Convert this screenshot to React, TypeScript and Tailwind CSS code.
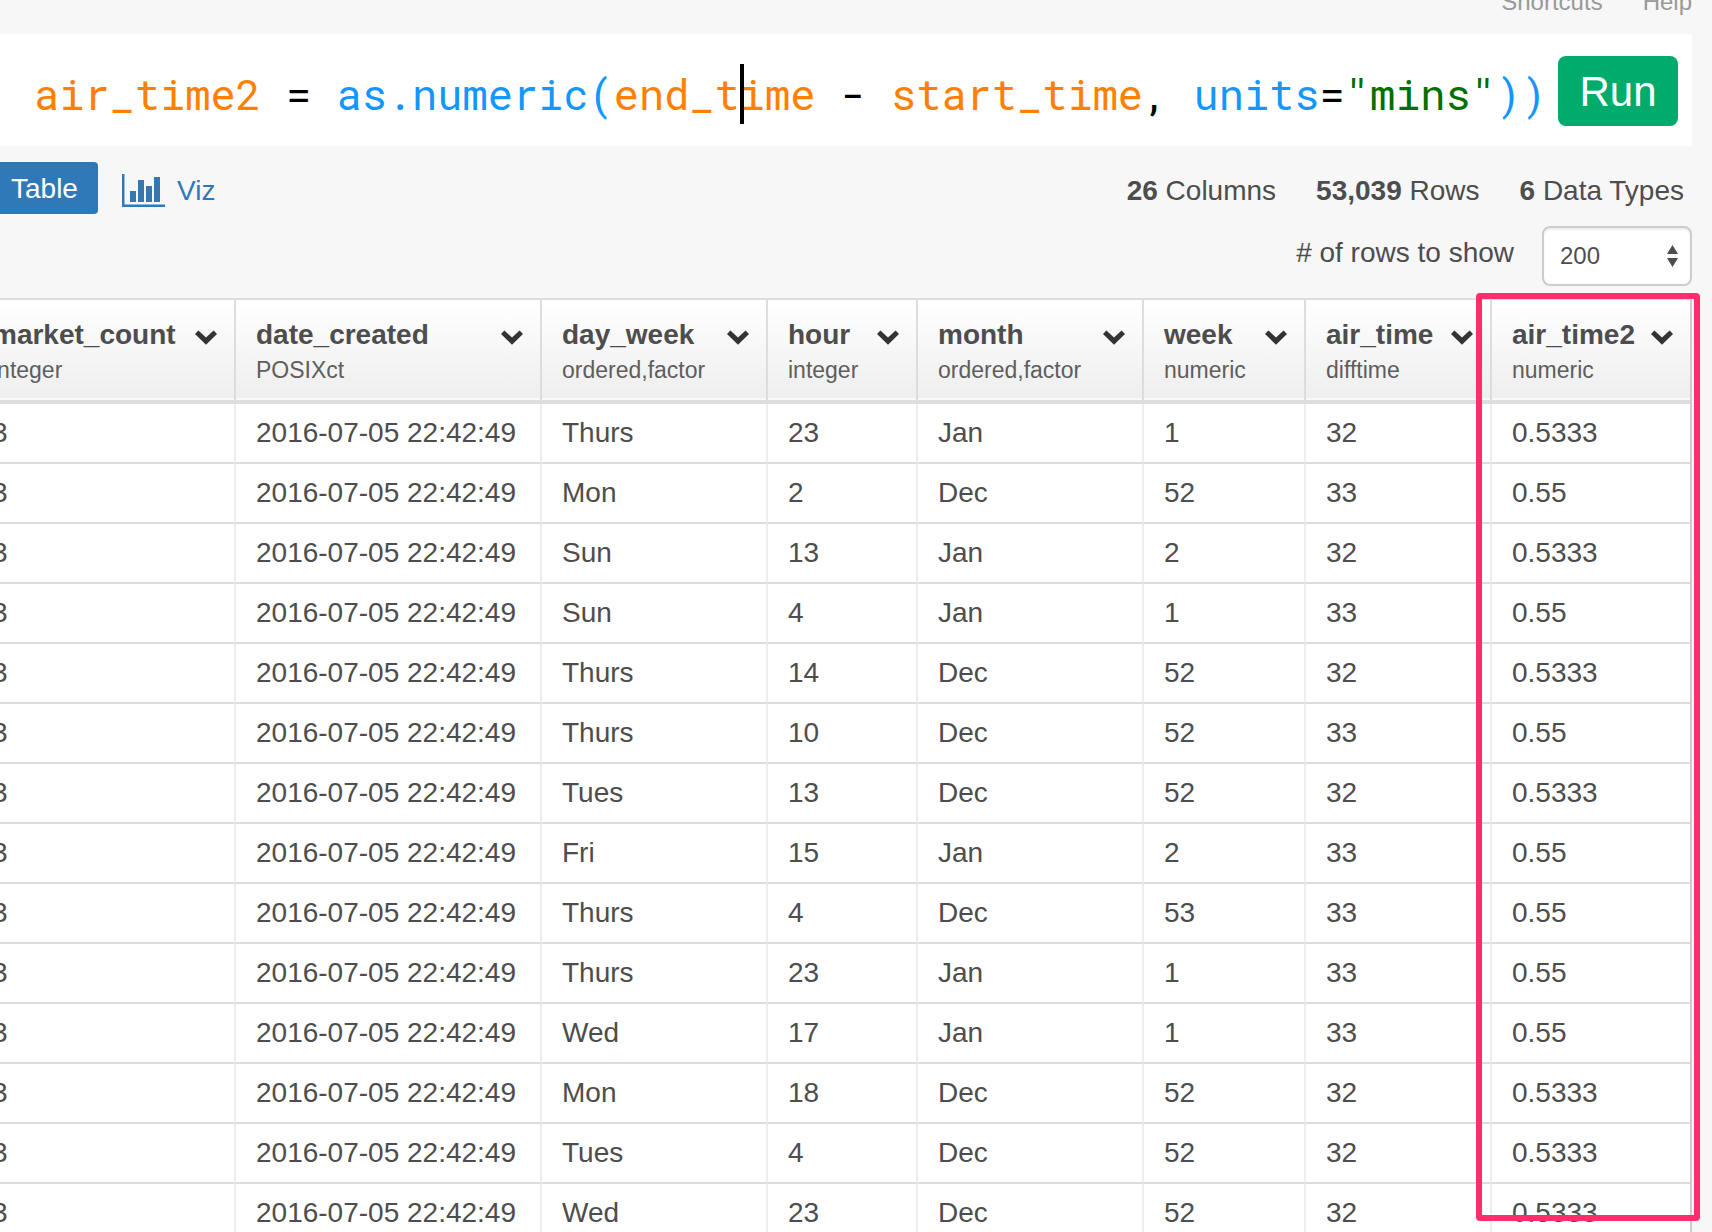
import { useState } from 'react';

type Column = { name: string; type: string; width: string };

const COLUMNS: Column[] = [
  { name: 'market_count', type: 'integer', width: 'w-[264px]' },
  { name: 'date_created', type: 'POSIXct', width: 'w-[306px]' },
  { name: 'day_week', type: 'ordered,factor', width: 'w-[226px]' },
  { name: 'hour', type: 'integer', width: 'w-[150px]' },
  { name: 'month', type: 'ordered,factor', width: 'w-[226px]' },
  { name: 'week', type: 'numeric', width: 'w-[162px]' },
  { name: 'air_time', type: 'difftime', width: 'w-[186px]' },
  { name: 'air_time2', type: 'numeric', width: 'w-[198px]' },
];

const CREATED = '2016-07-05 22:42:49';

const ROWS: string[][] = [
  ['3', CREATED, 'Thurs', '23', 'Jan', '1', '32', '0.5333'],
  ['3', CREATED, 'Mon', '2', 'Dec', '52', '33', '0.55'],
  ['3', CREATED, 'Sun', '13', 'Jan', '2', '32', '0.5333'],
  ['3', CREATED, 'Sun', '4', 'Jan', '1', '33', '0.55'],
  ['3', CREATED, 'Thurs', '14', 'Dec', '52', '32', '0.5333'],
  ['3', CREATED, 'Thurs', '10', 'Dec', '52', '33', '0.55'],
  ['3', CREATED, 'Tues', '13', 'Dec', '52', '32', '0.5333'],
  ['3', CREATED, 'Fri', '15', 'Jan', '2', '33', '0.55'],
  ['3', CREATED, 'Thurs', '4', 'Dec', '53', '33', '0.55'],
  ['3', CREATED, 'Thurs', '23', 'Jan', '1', '33', '0.55'],
  ['3', CREATED, 'Wed', '17', 'Jan', '1', '33', '0.55'],
  ['3', CREATED, 'Mon', '18', 'Dec', '52', '32', '0.5333'],
  ['3', CREATED, 'Tues', '4', 'Dec', '52', '32', '0.5333'],
  ['3', CREATED, 'Wed', '23', 'Dec', '52', '32', '0.5333'],
];

function ChevronIcon(): React.ReactElement {
  return (
    <svg width="22" height="15" viewBox="0 0 22 15" aria-hidden="true">
      <path d="M3.4 0.4 L11 7.6 L18.6 0.4 L22 4 L11 14.8 L0 4 Z" fill="#333" />
    </svg>
  );
}

function BarChartIcon(): React.ReactElement {
  return (
    <svg width="43" height="33" viewBox="0 0 43 33" fill="#3079b9" aria-hidden="true">
      <path d="M0 0h2.5v30.5h40.5v2.5H0z" />
      <path d="M8 17h6v11H8zM16 6h6v22h-6zM24 12h6v16h-6zM32 3h6v25h-6z" />
    </svg>
  );
}

// Formula line with syntax colours and the caret inside end_time
function FormulaEditor(): React.ReactElement {
  return (
    <div
      role="textbox"
      aria-label="Formula"
      tabIndex={0}
      className="flex-1 whitespace-pre pl-[34px] pt-2 font-['Roboto_Mono','DejaVu_Sans_Mono',monospace] text-[42px] leading-[60px] text-black outline-none"
    >
      <span className="text-[#ff8000]">air_time2</span>
      {' = '}
      <span className="text-[#1496ff]">as.numeric(</span>
      <span className="text-[#ff8000]">
        end_t
        <span className="relative">
          <span className="absolute -top-0.5 left-0 h-[60px] w-1 bg-black" />
        </span>
        ime
      </span>
      {' - '}
      <span className="text-[#ff8000]">start_time</span>
      {', '}
      <span className="text-[#1496ff]">units</span>
      {'='}
      <span className="text-[#007000]">"mins"</span>
      <span className="text-[#1496ff]">))</span>
    </div>
  );
}

function Stat({ value, label }: { value: string; label: string }): React.ReactElement {
  return (
    <span>
      <b>{value}</b> {label}
    </span>
  );
}

export default function App(): React.ReactElement {
  const [limit, setLimit] = useState('200');

  return (
    <div className="h-screen overflow-hidden bg-[#f7f7f7] font-['Liberation_Sans',Arial,sans-serif] text-[28px] leading-8 text-[#4d4d4d]">
      <nav className="flex h-[34px] items-start justify-end gap-10 overflow-hidden pr-5 text-2xl text-[#999]">
        <a href="#shortcuts" className="-mt-[14px]">Shortcuts</a>
        <a href="#help" className="-mt-[14px]">Help</a>
      </nav>

      <div className="mr-5 flex h-28 items-center bg-white pr-[14px]">
        <FormulaEditor />
        <button
          type="button"
          className="mt-[22px] h-[70px] w-[120px] shrink-0 self-start rounded-lg bg-[#00ab6c] pt-0.5 text-[42px] leading-[68px] text-white"
        >
          Run
        </button>
      </div>

      <div className="mt-4 flex h-[52px] items-center justify-between pr-7">
        <div className="flex items-center gap-6">
          <button type="button" className="h-[52px] w-[98px] rounded-r bg-[#3079b9] pt-0.5 pl-[11px] text-left text-white">
            Table
          </button>
          <button type="button" className="flex items-center gap-3 text-[#3079b9]">
            <span className="pt-1">
              <BarChartIcon />
            </span>
            <span className="pt-1.5">Viz</span>
          </button>
        </div>
        <div className="flex gap-10 pt-1.5">
          <Stat value="26" label="Columns" />
          <Stat value="53,039" label="Rows" />
          <Stat value="6" label="Data Types" />
        </div>
      </div>

      <div className="mt-3 flex h-[60px] items-center justify-end gap-7 pr-5">
        <label htmlFor="row-limit" className="pb-1.5">
          # of rows to show
        </label>
        <div className="relative">
          <select
            id="row-limit"
            value={limit}
            onChange={(e) => setLimit(e.target.value)}
            className="h-[60px] w-[150px] appearance-none rounded-lg border-2 border-[#ccc] bg-white pl-4 text-2xl text-[#4d4d4d] shadow-[inset_0_2px_2px_rgba(0,0,0,0.07)]"
          >
            <option>100</option>
            <option>200</option>
            <option>500</option>
          </select>
          <svg
            width="11"
            height="22"
            viewBox="0 0 11 22"
            fill="#4d4d4d"
            aria-hidden="true"
            className="pointer-events-none absolute top-[19px] right-[14px]"
          >
            <path d="M5.5 0L11 9H0zM5.5 22L11 13H0z" />
          </svg>
        </div>
      </div>

      <div className="relative mt-3 mr-5">
        <table className="-ml-7 w-[calc(100%+28px)] table-fixed border-separate border-spacing-0 border-t-2 border-r-2 border-t-[#ddd] border-r-[#ccc] bg-white">
          <thead>
            <tr>
              {COLUMNS.map((col) => (
                <th
                  key={col.name}
                  scope="col"
                  className={`${col.width} h-[104px] border-r-2 border-b-4 border-[#ddd] bg-linear-to-b from-white to-[#eee] p-0 text-left align-top last:border-r-0`}
                >
                  <div className="h-[100px] border-b-2 border-[#f9f9f9] pt-[19px] pr-[17px] pl-5">
                    <div className="flex items-center justify-between">
                      <span>{col.name}</span>
                      <button type="button" aria-label={`${col.name} menu`} className="pt-1">
                        <ChevronIcon />
                      </button>
                    </div>
                    <div className="pt-[3px] text-[23px] font-light text-[#5e5e5e]">{col.type}</div>
                  </div>
                </th>
              ))}
            </tr>
          </thead>
          <tbody>
            {ROWS.map((row, i) => (
              <tr key={i}>
                {row.map((cell, j) => (
                  <td
                    key={j}
                    className="h-[60px] border-r-2 border-b-2 border-r-[#eee] border-b-[#ddd] py-0 pr-0 pl-5 whitespace-nowrap last:border-r-0"
                  >
                    {cell}
                  </td>
                ))}
              </tr>
            ))}
          </tbody>
        </table>

        {/* highlight around the new column */}
        <div className="pointer-events-none absolute -top-[5px] -right-2 h-[928px] w-[224px] rounded border-[6px] border-[#ff2d6b]" />
      </div>
    </div>
  );
}
